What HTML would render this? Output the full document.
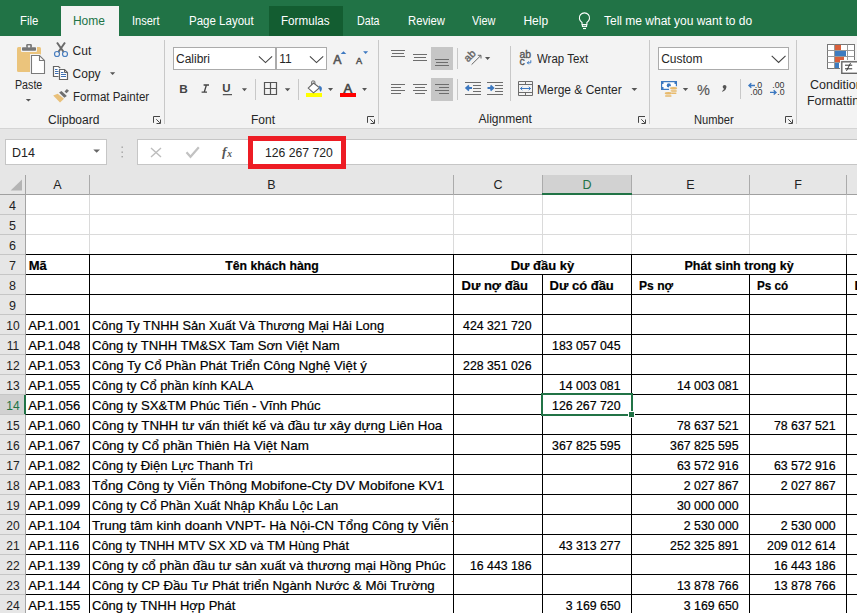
<!DOCTYPE html>
<html><head><meta charset="utf-8"><style>
html,body{margin:0;padding:0}
body{width:857px;height:613px;overflow:hidden;position:relative;background:#fff;font-family:"Liberation Sans",sans-serif}
.r{position:absolute}
.t{position:absolute;line-height:0;white-space:nowrap;-webkit-text-stroke:0.2px currentColor}
.ns{-webkit-text-stroke:0}
.clip{position:absolute;overflow:hidden}
svg{position:absolute;overflow:visible}
</style></head><body>
<div class="r" style="left:0px;top:0px;width:857px;height:36px;background:#217346;"></div>
<div class="r" style="left:61px;top:6px;width:58px;height:30px;background:#f3f3f3;"></div>
<div class="r" style="left:269px;top:6px;width:74px;height:30px;background:#135d31;"></div>
<div class="t ns" style="top:20.84px;font-size:12px;transform:scaleX(0.950);transform-origin:0 0;color:#fff;left:19.9px;">File</div>
<div class="t ns" style="top:20.84px;font-size:12px;color:#217346;left:72.9px;">Home</div>
<div class="t ns" style="top:20.84px;font-size:12px;transform:scaleX(0.920);transform-origin:0 0;color:#fff;left:132.4px;">Insert</div>
<div class="t ns" style="top:20.84px;font-size:12px;transform:scaleX(0.960);transform-origin:0 0;color:#fff;left:188.9px;">Page Layout</div>
<div class="t ns" style="top:20.84px;font-size:12px;transform:scaleX(0.970);transform-origin:0 0;color:#fff;left:280.9px;">Formulas</div>
<div class="t ns" style="top:20.84px;font-size:12px;transform:scaleX(0.890);transform-origin:0 0;color:#fff;left:356.9px;">Data</div>
<div class="t ns" style="top:20.84px;font-size:12px;transform:scaleX(0.940);transform-origin:0 0;color:#fff;left:407.59999999999997px;">Review</div>
<div class="t ns" style="top:20.84px;font-size:12px;transform:scaleX(0.910);transform-origin:0 0;color:#fff;left:471.7px;">View</div>
<div class="t ns" style="top:20.84px;font-size:12px;color:#fff;left:523.4px;">Help</div>
<div class="t ns" style="top:20.84px;font-size:12px;color:#fff;left:604.0px;">Tell me what you want to do</div>
<div class="r" style="left:0px;top:36px;width:857px;height:92px;background:#f3f3f3;"></div>
<div class="r" style="left:0px;top:128px;width:857px;height:1px;background:#d4d4d4;"></div>
<div class="r" style="left:164px;top:40px;width:1px;height:84px;background:#c8c8c8;"></div>
<div class="r" style="left:378px;top:40px;width:1px;height:84px;background:#c8c8c8;"></div>
<div class="r" style="left:649px;top:40px;width:1px;height:84px;background:#c8c8c8;"></div>
<div class="r" style="left:796px;top:40px;width:1px;height:84px;background:#c8c8c8;"></div>
<div class="t ns" style="top:85.04px;font-size:12px;transform:scaleX(0.890);transform-origin:0 0;color:#262626;left:15.3px;">Paste</div>
<div class="t ns" style="top:50.64px;font-size:12px;color:#262626;left:72.6px;">Cut</div>
<div class="t ns" style="top:73.84px;font-size:12px;color:#262626;left:72.6px;">Copy</div>
<div class="t ns" style="top:96.84px;font-size:12px;transform:scaleX(0.960);transform-origin:0 0;color:#262626;left:72.9px;">Format Painter</div>
<div class="t ns" style="top:119.74px;font-size:12px;color:#262626;left:48px;">Clipboard</div>
<div class="t ns" style="top:119.84px;font-size:12px;color:#262626;left:251px;">Font</div>
<div class="t ns" style="top:58.74px;font-size:12px;transform:scaleX(0.955);transform-origin:0 0;color:#262626;left:537.2px;">Wrap Text</div>
<div class="t ns" style="top:90.04px;font-size:12px;color:#262626;left:537px;">Merge &amp; Center</div>
<div class="t ns" style="top:119.44px;font-size:12px;color:#262626;left:478.5px;">Alignment</div>
<div class="t ns" style="top:119.64px;font-size:12px;transform:scaleX(0.930);transform-origin:0 0;color:#262626;left:694.3px;">Number</div>
<div class="t ns" style="top:84.84px;font-size:12px;transform:scaleX(1.040);transform-origin:0 0;color:#262626;left:810px;">Conditional</div>
<div class="t ns" style="top:100.74px;font-size:12px;transform:scaleX(1.030);transform-origin:0 0;color:#262626;left:806.8px;">Formatting</div>
<div class="r" style="left:0px;top:129px;width:857px;height:46px;background:#e6e6e6;"></div>
<div class="r" style="left:5px;top:139px;width:102px;height:26px;background:#fff;border:1px solid #c6c6c6;box-sizing:border-box"></div>
<div class="t ns" style="top:152.67px;font-size:12.5px;color:#222;left:12px;">D14</div>
<div class="r" style="left:137px;top:139px;width:110px;height:26px;background:#fff;border:1px solid #c6c6c6;box-sizing:border-box"></div>
<div class="r" style="left:246px;top:139px;width:620px;height:26px;background:#fff;border:1px solid #c6c6c6;box-sizing:border-box;border-left:none"></div>
<div class="r" style="left:248px;top:136px;width:98px;height:33px;background:transparent;border:5px solid #ed1c24;box-sizing:border-box"></div>
<div class="t ns" style="top:152.97px;font-size:12.5px;transform:scaleX(0.975);transform-origin:0 0;color:#222;left:265.3px;">126 267 720</div>
<div class="r" style="left:0px;top:175px;width:857px;height:20px;background:#e6e6e6;"></div>
<div class="r" style="left:542px;top:175px;width:90px;height:20px;background:#d2d2d2;"></div>
<div class="r" style="left:0px;top:194px;width:857px;height:1px;background:#a0a0a0;"></div>
<div class="r" style="left:25px;top:175px;width:1px;height:438px;background:#a4a4a4;"></div>
<div class="r" style="left:89px;top:175px;width:1px;height:20px;background:#ababab;"></div>
<div class="r" style="left:453px;top:175px;width:1px;height:20px;background:#ababab;"></div>
<div class="r" style="left:542px;top:175px;width:1px;height:20px;background:#ababab;"></div>
<div class="r" style="left:631px;top:175px;width:1px;height:20px;background:#ababab;"></div>
<div class="r" style="left:749px;top:175px;width:1px;height:20px;background:#ababab;"></div>
<div class="r" style="left:846px;top:175px;width:1px;height:20px;background:#ababab;"></div>
<div class="r" style="left:542px;top:193px;width:90px;height:2px;background:#217346;"></div>
<div class="t ns" style="top:184.67px;font-size:12.5px;color:#222;left:-342.5px;width:800px;text-align:center;">A</div>
<div class="t ns" style="top:184.67px;font-size:12.5px;color:#222;left:-128.5px;width:800px;text-align:center;">B</div>
<div class="t ns" style="top:184.67px;font-size:12.5px;color:#222;left:98.0px;width:800px;text-align:center;">C</div>
<div class="t ns" style="top:184.67px;font-size:12.5px;color:#217346;left:187.0px;width:800px;text-align:center;">D</div>
<div class="t ns" style="top:184.67px;font-size:12.5px;color:#222;left:290.5px;width:800px;text-align:center;">E</div>
<div class="t ns" style="top:184.67px;font-size:12.5px;color:#222;left:398.0px;width:800px;text-align:center;">F</div>
<div class="r" style="left:26px;top:195px;width:831px;height:418px;background:#fff;"></div>
<div class="r" style="left:0px;top:195px;width:25px;height:418px;background:#e6e6e6;"></div>
<div class="r" style="left:0px;top:395px;width:24px;height:20px;background:#d2d2d2;"></div>
<div class="r" style="left:24px;top:395px;width:2px;height:20px;background:#217346;"></div>
<div class="r" style="left:0px;top:214px;width:25px;height:1px;background:#c6c6c6;"></div>
<div class="r" style="left:26px;top:214px;width:831px;height:1px;background:#dadada;"></div>
<div class="r" style="left:0px;top:234px;width:25px;height:1px;background:#c6c6c6;"></div>
<div class="r" style="left:26px;top:234px;width:831px;height:1px;background:#dadada;"></div>
<div class="r" style="left:0px;top:254px;width:25px;height:1px;background:#c6c6c6;"></div>
<div class="r" style="left:89px;top:195px;width:1px;height:59px;background:#dadada;"></div>
<div class="r" style="left:453px;top:195px;width:1px;height:59px;background:#dadada;"></div>
<div class="r" style="left:542px;top:195px;width:1px;height:59px;background:#dadada;"></div>
<div class="r" style="left:631px;top:195px;width:1px;height:59px;background:#dadada;"></div>
<div class="r" style="left:749px;top:195px;width:1px;height:59px;background:#dadada;"></div>
<div class="r" style="left:846px;top:195px;width:1px;height:59px;background:#dadada;"></div>
<div class="t ns" style="top:205.67px;font-size:12.5px;color:#222;left:-387.5px;width:800px;text-align:center;">4</div>
<div class="t ns" style="top:225.67px;font-size:12.5px;color:#222;left:-387.5px;width:800px;text-align:center;">5</div>
<div class="t ns" style="top:245.67px;font-size:12.5px;color:#222;left:-387.5px;width:800px;text-align:center;">6</div>
<div class="t ns" style="top:265.67px;font-size:12.5px;color:#222;left:-387.5px;width:800px;text-align:center;">7</div>
<div class="r" style="left:0px;top:274px;width:25px;height:1px;background:#c6c6c6;"></div>
<div class="t ns" style="top:285.67px;font-size:12.5px;color:#222;left:-387.5px;width:800px;text-align:center;">8</div>
<div class="r" style="left:0px;top:294px;width:25px;height:1px;background:#c6c6c6;"></div>
<div class="t ns" style="top:305.67px;font-size:12.5px;color:#222;left:-387.5px;width:800px;text-align:center;">9</div>
<div class="r" style="left:0px;top:314px;width:25px;height:1px;background:#c6c6c6;"></div>
<div class="t ns" style="top:325.67px;font-size:12.5px;transform:scaleX(0.960);transform-origin:50% 0;color:#222;left:-387.2px;width:800px;text-align:center;">10</div>
<div class="r" style="left:0px;top:334px;width:25px;height:1px;background:#c6c6c6;"></div>
<div class="t ns" style="top:345.67px;font-size:12.5px;transform:scaleX(0.960);transform-origin:50% 0;color:#222;left:-387.2px;width:800px;text-align:center;">11</div>
<div class="r" style="left:0px;top:354px;width:25px;height:1px;background:#c6c6c6;"></div>
<div class="t ns" style="top:365.67px;font-size:12.5px;transform:scaleX(0.960);transform-origin:50% 0;color:#222;left:-387.2px;width:800px;text-align:center;">12</div>
<div class="r" style="left:0px;top:374px;width:25px;height:1px;background:#c6c6c6;"></div>
<div class="t ns" style="top:385.67px;font-size:12.5px;transform:scaleX(0.960);transform-origin:50% 0;color:#222;left:-387.2px;width:800px;text-align:center;">13</div>
<div class="r" style="left:0px;top:394px;width:25px;height:1px;background:#c6c6c6;"></div>
<div class="t ns" style="top:405.67px;font-size:12.5px;transform:scaleX(0.960);transform-origin:50% 0;color:#217346;left:-387.2px;width:800px;text-align:center;">14</div>
<div class="r" style="left:0px;top:414px;width:25px;height:1px;background:#c6c6c6;"></div>
<div class="t ns" style="top:425.67px;font-size:12.5px;transform:scaleX(0.960);transform-origin:50% 0;color:#222;left:-387.2px;width:800px;text-align:center;">15</div>
<div class="r" style="left:0px;top:434px;width:25px;height:1px;background:#c6c6c6;"></div>
<div class="t ns" style="top:445.67px;font-size:12.5px;transform:scaleX(0.960);transform-origin:50% 0;color:#222;left:-387.2px;width:800px;text-align:center;">16</div>
<div class="r" style="left:0px;top:454px;width:25px;height:1px;background:#c6c6c6;"></div>
<div class="t ns" style="top:465.67px;font-size:12.5px;transform:scaleX(0.960);transform-origin:50% 0;color:#222;left:-387.2px;width:800px;text-align:center;">17</div>
<div class="r" style="left:0px;top:474px;width:25px;height:1px;background:#c6c6c6;"></div>
<div class="t ns" style="top:485.67px;font-size:12.5px;transform:scaleX(0.960);transform-origin:50% 0;color:#222;left:-387.2px;width:800px;text-align:center;">18</div>
<div class="r" style="left:0px;top:494px;width:25px;height:1px;background:#c6c6c6;"></div>
<div class="t ns" style="top:505.67px;font-size:12.5px;transform:scaleX(0.960);transform-origin:50% 0;color:#222;left:-387.2px;width:800px;text-align:center;">19</div>
<div class="r" style="left:0px;top:514px;width:25px;height:1px;background:#c6c6c6;"></div>
<div class="t ns" style="top:525.67px;font-size:12.5px;transform:scaleX(0.960);transform-origin:50% 0;color:#222;left:-387.2px;width:800px;text-align:center;">20</div>
<div class="r" style="left:0px;top:534px;width:25px;height:1px;background:#c6c6c6;"></div>
<div class="t ns" style="top:545.67px;font-size:12.5px;transform:scaleX(0.960);transform-origin:50% 0;color:#222;left:-387.2px;width:800px;text-align:center;">21</div>
<div class="r" style="left:0px;top:554px;width:25px;height:1px;background:#c6c6c6;"></div>
<div class="t ns" style="top:565.67px;font-size:12.5px;transform:scaleX(0.960);transform-origin:50% 0;color:#222;left:-387.2px;width:800px;text-align:center;">22</div>
<div class="r" style="left:0px;top:574px;width:25px;height:1px;background:#c6c6c6;"></div>
<div class="t ns" style="top:585.67px;font-size:12.5px;transform:scaleX(0.960);transform-origin:50% 0;color:#222;left:-387.2px;width:800px;text-align:center;">23</div>
<div class="r" style="left:0px;top:594px;width:25px;height:1px;background:#c6c6c6;"></div>
<div class="t ns" style="top:605.67px;font-size:12.5px;transform:scaleX(0.960);transform-origin:50% 0;color:#222;left:-387.2px;width:800px;text-align:center;">24</div>
<div class="r" style="left:0px;top:614px;width:25px;height:1px;background:#c6c6c6;"></div>
<div class="r" style="left:26px;top:254px;width:831px;height:1px;background:#000;"></div>
<div class="r" style="left:26px;top:274px;width:517px;height:1px;background:#000;"></div>
<div class="r" style="left:542px;top:274px;width:315px;height:1px;background:#000;"></div>
<div class="r" style="left:26px;top:294px;width:831px;height:1px;background:#000;"></div>
<div class="r" style="left:26px;top:314px;width:831px;height:1px;background:#000;"></div>
<div class="r" style="left:26px;top:334px;width:831px;height:1px;background:#000;"></div>
<div class="r" style="left:26px;top:354px;width:831px;height:1px;background:#000;"></div>
<div class="r" style="left:26px;top:374px;width:831px;height:1px;background:#000;"></div>
<div class="r" style="left:26px;top:394px;width:831px;height:1px;background:#000;"></div>
<div class="r" style="left:26px;top:414px;width:831px;height:1px;background:#000;"></div>
<div class="r" style="left:26px;top:434px;width:831px;height:1px;background:#000;"></div>
<div class="r" style="left:26px;top:454px;width:831px;height:1px;background:#000;"></div>
<div class="r" style="left:26px;top:474px;width:831px;height:1px;background:#000;"></div>
<div class="r" style="left:26px;top:494px;width:831px;height:1px;background:#000;"></div>
<div class="r" style="left:26px;top:514px;width:831px;height:1px;background:#000;"></div>
<div class="r" style="left:26px;top:534px;width:831px;height:1px;background:#000;"></div>
<div class="r" style="left:26px;top:554px;width:831px;height:1px;background:#000;"></div>
<div class="r" style="left:26px;top:574px;width:831px;height:1px;background:#000;"></div>
<div class="r" style="left:26px;top:594px;width:831px;height:1px;background:#000;"></div>
<div class="r" style="left:26px;top:614px;width:831px;height:1px;background:#000;"></div>
<div class="r" style="left:89px;top:254px;width:1px;height:359px;background:#000;"></div>
<div class="r" style="left:453px;top:254px;width:1px;height:359px;background:#000;"></div>
<div class="r" style="left:542px;top:275px;width:1px;height:338px;background:#000;"></div>
<div class="r" style="left:631px;top:254px;width:1px;height:359px;background:#000;"></div>
<div class="r" style="left:749px;top:275px;width:1px;height:338px;background:#000;"></div>
<div class="r" style="left:846px;top:254px;width:1px;height:359px;background:#000;"></div>
<div class="r" style="left:541px;top:393px;width:92px;height:23px;border:2px solid #217346;box-sizing:border-box"></div>
<div class="r" style="left:629px;top:412px;width:5px;height:5px;background:#217346;border:1px solid #fff;box-sizing:content-box;left:628px;top:411px"></div>
<div class="t" style="top:265.50px;font-size:13px;font-weight:700;left:28.7px;">Mã</div>
<div class="t" style="top:265.50px;font-size:13px;transform:scaleX(0.944);transform-origin:50% 0;font-weight:700;left:-128.3px;width:800px;text-align:center;">Tên khách hàng</div>
<div class="t" style="top:265.50px;font-size:13px;font-weight:700;left:142.5px;width:800px;text-align:center;">Dư đầu kỳ</div>
<div class="t" style="top:265.50px;font-size:13px;transform:scaleX(0.963);transform-origin:50% 0;font-weight:700;left:339.29999999999995px;width:800px;text-align:center;">Phát sinh trong kỳ</div>
<div class="t" style="top:285.50px;font-size:13px;font-weight:700;left:461.5px;">Dư nợ đầu</div>
<div class="t" style="top:285.50px;font-size:13px;font-weight:700;left:549.5px;">Dư có đầu</div>
<div class="t" style="top:285.50px;font-size:13px;transform:scaleX(0.930);transform-origin:0 0;font-weight:700;left:638.8px;">Ps nợ</div>
<div class="t" style="top:285.50px;font-size:13px;transform:scaleX(0.900);transform-origin:0 0;font-weight:700;left:756.8px;">Ps có</div>
<div class="t" style="top:285.50px;font-size:13px;font-weight:700;left:854.4px;">Dư</div>
<div class="t" style="top:325.50px;font-size:13px;left:28.3px;">AP.1.001</div>
<div class="clip" style="left:90px;top:310px;width:363px;height:24px"><div class="t" style="left:2px;top:15.50px;font-size:13px;transform:scaleX(0.991);transform-origin:0 0">Công Ty TNHH Sản Xuất Và Thương Mại Hải Long</div></div>
<div class="t" style="top:325.67px;font-size:12.5px;transform:scaleX(0.985);transform-origin:100% 0;right:325.4px;">424 321 720</div>
<div class="t" style="top:345.50px;font-size:13px;left:28.3px;">AP.1.048</div>
<div class="clip" style="left:90px;top:330px;width:363px;height:24px"><div class="t" style="left:2px;top:15.50px;font-size:13px;transform:scaleX(1.01);transform-origin:0 0">Công ty TNHH TM&amp;SX Tam Sơn Việt Nam</div></div>
<div class="t" style="top:345.67px;font-size:12.5px;transform:scaleX(0.985);transform-origin:100% 0;right:236.39999999999998px;">183 057 045</div>
<div class="t" style="top:365.50px;font-size:13px;left:28.3px;">AP.1.053</div>
<div class="clip" style="left:90px;top:350px;width:363px;height:24px"><div class="t" style="left:2px;top:15.50px;font-size:13px;transform:scaleX(1.016);transform-origin:0 0">Công Ty Cổ Phần Phát Triển Công Nghệ Việt ý</div></div>
<div class="t" style="top:365.67px;font-size:12.5px;transform:scaleX(0.985);transform-origin:100% 0;right:325.4px;">228 351 026</div>
<div class="t" style="top:385.50px;font-size:13px;left:28.3px;">AP.1.055</div>
<div class="clip" style="left:90px;top:370px;width:363px;height:24px"><div class="t" style="left:2px;top:15.50px;font-size:13px;transform:scaleX(0.993);transform-origin:0 0">Công ty Cổ phần kính KALA</div></div>
<div class="t" style="top:385.67px;font-size:12.5px;transform:scaleX(0.985);transform-origin:100% 0;right:236.39999999999998px;">14 003 081</div>
<div class="t" style="top:385.67px;font-size:12.5px;transform:scaleX(0.985);transform-origin:100% 0;right:118.39999999999998px;">14 003 081</div>
<div class="t" style="top:405.50px;font-size:13px;left:28.3px;">AP.1.056</div>
<div class="clip" style="left:90px;top:390px;width:363px;height:24px"><div class="t" style="left:2px;top:15.50px;font-size:13px;transform:scaleX(1.011);transform-origin:0 0">Công ty SX&amp;TM Phúc Tiến - Vĩnh Phúc</div></div>
<div class="t" style="top:405.67px;font-size:12.5px;transform:scaleX(0.985);transform-origin:100% 0;right:236.39999999999998px;">126 267 720</div>
<div class="t" style="top:425.50px;font-size:13px;left:28.3px;">AP.1.060</div>
<div class="clip" style="left:90px;top:410px;width:363px;height:24px"><div class="t" style="left:2px;top:15.50px;font-size:13px;transform:scaleX(1.023);transform-origin:0 0">Công ty TNHH tư vấn thiết kế và đầu tư xây dựng Liên Hoa</div></div>
<div class="t" style="top:425.67px;font-size:12.5px;transform:scaleX(0.985);transform-origin:100% 0;right:118.39999999999998px;">78 637 521</div>
<div class="t" style="top:425.67px;font-size:12.5px;transform:scaleX(0.985);transform-origin:100% 0;right:21.399999999999977px;">78 637 521</div>
<div class="t" style="top:445.50px;font-size:13px;left:28.3px;">AP.1.067</div>
<div class="clip" style="left:90px;top:430px;width:363px;height:24px"><div class="t" style="left:2px;top:15.50px;font-size:13px;transform:scaleX(1.03);transform-origin:0 0">Công ty Cổ phần Thiên Hà Việt Nam</div></div>
<div class="t" style="top:445.67px;font-size:12.5px;transform:scaleX(0.985);transform-origin:100% 0;right:236.39999999999998px;">367 825 595</div>
<div class="t" style="top:445.67px;font-size:12.5px;transform:scaleX(0.985);transform-origin:100% 0;right:118.39999999999998px;">367 825 595</div>
<div class="t" style="top:465.50px;font-size:13px;left:28.3px;">AP.1.082</div>
<div class="clip" style="left:90px;top:450px;width:363px;height:24px"><div class="t" style="left:2px;top:15.50px;font-size:13px;transform:scaleX(1.005);transform-origin:0 0">Công ty Điện Lực Thanh Trì</div></div>
<div class="t" style="top:465.67px;font-size:12.5px;transform:scaleX(0.985);transform-origin:100% 0;right:118.39999999999998px;">63 572 916</div>
<div class="t" style="top:465.67px;font-size:12.5px;transform:scaleX(0.985);transform-origin:100% 0;right:21.399999999999977px;">63 572 916</div>
<div class="t" style="top:485.50px;font-size:13px;left:28.3px;">AP.1.083</div>
<div class="clip" style="left:90px;top:470px;width:363px;height:24px"><div class="t" style="left:2px;top:15.50px;font-size:13px;transform:scaleX(1.05);transform-origin:0 0">Tổng Công ty Viễn Thông Mobifone-Cty DV Mobifone KV1</div></div>
<div class="t" style="top:485.67px;font-size:12.5px;transform:scaleX(0.985);transform-origin:100% 0;right:118.39999999999998px;">2 027 867</div>
<div class="t" style="top:485.67px;font-size:12.5px;transform:scaleX(0.985);transform-origin:100% 0;right:21.399999999999977px;">2 027 867</div>
<div class="t" style="top:505.50px;font-size:13px;left:28.3px;">AP.1.099</div>
<div class="clip" style="left:90px;top:490px;width:363px;height:24px"><div class="t" style="left:2px;top:15.50px;font-size:13px;transform:scaleX(0.993);transform-origin:0 0">Công ty Cổ Phần Xuất Nhập Khẩu Lộc Lan</div></div>
<div class="t" style="top:505.67px;font-size:12.5px;transform:scaleX(0.985);transform-origin:100% 0;right:118.39999999999998px;">30 000 000</div>
<div class="t" style="top:525.50px;font-size:13px;left:28.3px;">AP.1.104</div>
<div class="clip" style="left:90px;top:510px;width:363px;height:24px"><div class="t" style="left:2px;top:15.50px;font-size:13px;transform:scaleX(1.033);transform-origin:0 0">Trung tâm kinh doanh VNPT- Hà Nội-CN Tổng Công ty Viễn Thông</div></div>
<div class="t" style="top:525.67px;font-size:12.5px;transform:scaleX(0.985);transform-origin:100% 0;right:118.39999999999998px;">2 530 000</div>
<div class="t" style="top:525.67px;font-size:12.5px;transform:scaleX(0.985);transform-origin:100% 0;right:21.399999999999977px;">2 530 000</div>
<div class="t" style="top:545.50px;font-size:13px;left:28.3px;">AP.1.116</div>
<div class="clip" style="left:90px;top:530px;width:363px;height:24px"><div class="t" style="left:2px;top:15.50px;font-size:13px;transform:scaleX(0.979);transform-origin:0 0">Công ty TNHH MTV SX XD và TM Hùng Phát</div></div>
<div class="t" style="top:545.67px;font-size:12.5px;transform:scaleX(0.985);transform-origin:100% 0;right:236.39999999999998px;">43 313 277</div>
<div class="t" style="top:545.67px;font-size:12.5px;transform:scaleX(0.985);transform-origin:100% 0;right:118.39999999999998px;">252 325 891</div>
<div class="t" style="top:545.67px;font-size:12.5px;transform:scaleX(0.985);transform-origin:100% 0;right:21.399999999999977px;">209 012 614</div>
<div class="t" style="top:565.50px;font-size:13px;left:28.3px;">AP.1.139</div>
<div class="clip" style="left:90px;top:550px;width:363px;height:24px"><div class="t" style="left:2px;top:15.50px;font-size:13px;transform:scaleX(1.026);transform-origin:0 0">Công ty cổ phần đầu tư sản xuất và thương mại Hồng Phúc</div></div>
<div class="t" style="top:565.67px;font-size:12.5px;transform:scaleX(0.985);transform-origin:100% 0;right:325.4px;">16 443 186</div>
<div class="t" style="top:565.67px;font-size:12.5px;transform:scaleX(0.985);transform-origin:100% 0;right:21.399999999999977px;">16 443 186</div>
<div class="t" style="top:585.50px;font-size:13px;left:28.3px;">AP.1.144</div>
<div class="clip" style="left:90px;top:570px;width:363px;height:24px"><div class="t" style="left:2px;top:15.50px;font-size:13px;transform:scaleX(1.022);transform-origin:0 0">Công ty CP Đầu Tư Phát triển Ngành Nước &amp; Môi Trường</div></div>
<div class="t" style="top:585.67px;font-size:12.5px;transform:scaleX(0.985);transform-origin:100% 0;right:118.39999999999998px;">13 878 766</div>
<div class="t" style="top:585.67px;font-size:12.5px;transform:scaleX(0.985);transform-origin:100% 0;right:21.399999999999977px;">13 878 766</div>
<div class="t" style="top:605.50px;font-size:13px;left:28.3px;">AP.1.155</div>
<div class="clip" style="left:90px;top:590px;width:363px;height:24px"><div class="t" style="left:2px;top:15.50px;font-size:13px;transform:scaleX(1.0);transform-origin:0 0">Công ty TNHH Hợp Phát</div></div>
<div class="t" style="top:605.67px;font-size:12.5px;transform:scaleX(0.985);transform-origin:100% 0;right:236.39999999999998px;">3 169 650</div>
<div class="t" style="top:605.67px;font-size:12.5px;transform:scaleX(0.985);transform-origin:100% 0;right:118.39999999999998px;">3 169 650</div>
<svg style="left:0;top:0" width="857" height="195" viewBox="0 0 857 195">
<!-- bulb -->
<path d="M582,22.4 A5.1,5.1 0 1 1 586.9,22.4 L586.9,24.8 L582,24.8 Z" fill="none" stroke="#fff" stroke-width="1.1"/>
<rect x="582.4" y="24.6" width="4.2" height="2" fill="none" stroke="#fff" stroke-width="1"/>
<rect x="583" y="28" width="3" height="1.1" fill="#fff"/>
<!-- paste -->
<rect x="17" y="47" width="24" height="25" rx="1.5" fill="#ebc47c"/>
<rect x="21" y="46" width="16" height="6" rx="1" fill="#f3f3f3"/>
<rect x="22" y="47.2" width="14" height="3.6" rx="0.8" fill="#777"/>
<rect x="26.2" y="44" width="5.7" height="4" rx="1.2" fill="#777"/>
<rect x="27.8" y="45.4" width="2.4" height="2" fill="#f3f3f3"/>
<path d="M31.5,55.5 H39.5 L44.5,60.5 V73.5 H31.5 Z" fill="#f3f3f3" stroke="#f3f3f3" stroke-width="3"/>
<path d="M31.5,55.5 H39.5 L44.5,60.5 V73.5 H31.5 Z" fill="#fff" stroke="#7a7a7a" stroke-width="1.1"/>
<path d="M39.5,55.5 V60.5 H44.5" fill="none" stroke="#7a7a7a" stroke-width="1.1"/>
<path d="M25.8,99 H31 L28.4,101.6 Z" fill="#555"/>
<!-- scissors -->
<path d="M57,42.5 L63.8,52.2 M65,42.5 L58.2,52.2" stroke="#6a6a6a" stroke-width="2" fill="none"/>
<circle cx="57" cy="54" r="2.5" fill="none" stroke="#4a7fc0" stroke-width="1.2"/>
<circle cx="65" cy="54" r="2.5" fill="none" stroke="#4a7fc0" stroke-width="1.2"/>
<!-- copy -->
<rect x="53.5" y="66.5" width="6.5" height="10" fill="#fff"/>
<path d="M58.5,76.5 H53.5 V66.5 H58.5 L60.2,68.2" fill="none" stroke="#636363" stroke-width="1.2"/>
<path d="M55,69.5 H57.5 M55,71.5 H58.5 M55,73.5 H58.5" stroke="#3d6fb3" stroke-width="1"/>
<path d="M59.5,69.5 H64.5 L67.5,72.5 V79.5 H59.5 Z" fill="#fff" stroke="#636363" stroke-width="1.2"/>
<path d="M64.5,69.5 V72.5 H67.5" fill="none" stroke="#636363" stroke-width="1"/>
<path d="M61,72.5 H63.5 M61,74.5 H66 M61,76.5 H66" stroke="#3d6fb3" stroke-width="1"/>
<path d="M110,72.3 H115.2 L112.6,74.9 Z" fill="#555"/>
<!-- format painter -->
<path d="M53.2,95.5 L57.7,93.7 L64,98.7 L60,102.6 Z" fill="#e9c07a"/>
<path d="M59.1,92.6 L61.5,91 L66.9,96 L64.3,97.8 Z" fill="#6f6f6f"/>
<path d="M64.5,91.5 L66.9,89 L69,90.8 L66.5,93.3 Z" fill="#6f6f6f"/>
<!-- launchers -->
<g fill="none" stroke="#444" stroke-width="1">
<path d="M153.5,122.8 V116.5 H160"/><path d="M156.3,119.3 L159.8,122.8 M160.5,119.5 V123.5 H156.5"/>
<path d="M367.5,122.8 V116.5 H374"/><path d="M370.3,119.3 L373.8,122.8 M374.5,119.5 V123.5 H370.5"/>
<path d="M638.5,122.8 V116.5 H645"/><path d="M641.3,119.3 L644.8,122.8 M645.5,119.5 V123.5 H641.5"/>
<path d="M785.5,122.8 V116.5 H792"/><path d="M788.3,119.3 L791.8,122.8 M792.5,119.5 V123.5 H788.5"/>
</g>
<!-- font boxes -->
<rect x="173.5" y="47.5" width="153" height="22" fill="#fff" stroke="#ababab"/>
<path d="M275.5,47.5 V69.5 M276.5,47.5 V69.5" stroke="#ababab"/>
<text x="176" y="63" font-size="12" fill="#262626" font-family="Liberation Sans">Calibri</text>
<text x="279.3" y="63" font-size="12" fill="#262626" font-family="Liberation Sans">11</text>
<path d="M258.9,56.3 L265.5,62.6 L272.1,56.3 M309.9,56.3 L316.5,62.6 L323.2,56.3" fill="none" stroke="#444" stroke-width="1.1"/>
<text x="333.2" y="63.9" font-size="12.3" fill="#555" stroke="#555" stroke-width="0.6" font-family="Liberation Sans">A</text>
<path d="M340.7,54 L343.5,51.3 L346.3,54 Z" fill="#3c78c0"/>
<text x="356" y="63.9" font-size="9.2" fill="#555" stroke="#555" stroke-width="0.5" font-family="Liberation Sans">A</text>
<path d="M363.1,51.3 H368.1 L365.6,54 Z" fill="#3c78c0"/>
<text x="179.2" y="92.7" font-size="11.8" font-weight="700" fill="#444" font-family="Liberation Sans">B</text>
<path d="M203.6,85 H209 M201.6,92.2 H207 M206.4,85 L204.2,92.2" stroke="#444" stroke-width="1.3" fill="none"/>
<text x="222.2" y="92.4" font-size="11.5" font-weight="700" fill="#444" font-family="Liberation Sans">U</text>
<rect x="222.8" y="94.1" width="9.2" height="1.1" fill="#444"/>
<path d="M241.9,88.2 H247 L244.45,91.2 Z M284.8,88.2 H290.3 L287.55,91.2 Z M328,88 H333.1 L330.55,91 Z M362.1,88 H367 L364.55,91 Z" fill="#555"/>
<rect x="255" y="79" width="1" height="21" fill="#c8c8c8"/>
<rect x="298" y="79" width="1" height="21" fill="#c8c8c8"/>
<path d="M264.5,82.5 H276.5 V94.5 H264.5 Z M270.5,82.5 V94.5 M264.5,88.5 H276.5" fill="none" stroke="#555" stroke-width="1.2"/>
<rect x="306" y="93" width="16" height="4" fill="#ffff00"/>
<path d="M311.7,86 V81.8 Q311.7,81 312.5,81 H314 Q314.9,81 314.9,82 V85.5" fill="none" stroke="#666" stroke-width="1"/>
<path d="M308.2,88.1 L313.5,83 L319.6,87.7 L313.5,92.8 Z" fill="#fff" stroke="#666" stroke-width="1.1"/>
<path d="M319,85.5 Q322.5,86.5 321.8,89.5 L320.8,92 Q318.8,90.5 319.4,88 Z" fill="#3c78c0"/>
<text x="343.5" y="92.6" font-size="13" fill="#444" stroke="#444" stroke-width="0.6" font-family="Liberation Sans">A</text>
<rect x="340" y="93" width="16" height="4" fill="#ff0000"/>
<!-- alignment -->
<rect x="431" y="47" width="22" height="23" fill="#c6c6c6"/>
<rect x="431" y="78" width="22" height="23" fill="#c6c6c6"/>
<g stroke="#6d6d6d" stroke-width="1" fill="none">
<path d="M391,50.5 H405 M392,53.5 H404 M391,56.5 H405"/>
<path d="M413,54.5 H427 M414,57.5 H426 M413,60.5 H427"/>
<path d="M435,59.5 H449 M436,62.5 H448 M435,65.5 H449"/>
<path d="M391,84.5 H405 M391,87.5 H401 M391,90.5 H405 M391,93.5 H401"/>
<path d="M413,84.5 H427 M415,87.5 H425 M413,90.5 H427 M415,93.5 H425"/>
<path d="M435,84.5 H449 M439,87.5 H449 M435,90.5 H449 M439,93.5 H449"/>
<path d="M465,82.5 H481 M473,85.5 H481 M473,88.5 H481 M473,91.5 H481 M465,94.5 H481"/>
<path d="M487,82.5 H503 M495,85.5 H503 M495,88.5 H503 M495,91.5 H503 M487,94.5 H503"/>
</g>
<rect x="457" y="48" width="1" height="21" fill="#c8c8c8"/>
<rect x="457" y="79" width="1" height="21" fill="#c8c8c8"/>
<rect x="510" y="46" width="1" height="55" fill="#c8c8c8"/>
<path d="M472,88 H466.5 M469,85.5 L466.2,88 L469,90.5" fill="none" stroke="#3c78c0" stroke-width="1.8"/>
<path d="M487.5,88 H493 M490.5,85.5 L493.3,88 L490.5,90.5" fill="none" stroke="#3c78c0" stroke-width="1.8"/>
<text x="0" y="0" font-size="10.5" fill="#666" stroke="#666" stroke-width="0.4" font-family="Liberation Sans" transform="translate(468,62.5) rotate(-45)">ab</text>
<path d="M471.6,64.6 L481,55.3 M477.8,55.3 H481 V58.5" fill="none" stroke="#666" stroke-width="1"/>
<path d="M485,56.9 H490.2 L487.6,59.9 Z" fill="#555"/>
<text x="519.4" y="57.9" font-size="10.5" fill="#555" stroke="#555" stroke-width="0.35" font-family="Liberation Sans" textLength="11.6" lengthAdjust="spacingAndGlyphs">ab</text>
<text x="519.6" y="65" font-size="10.5" fill="#555" stroke="#555" stroke-width="0.35" font-family="Liberation Sans">c</text>
<path d="M530.8,60.3 V62.8 H527.3 M528.8,61.3 L527.3,62.8 L528.8,64.3" fill="none" stroke="#3c78c0" stroke-width="1"/>
<path d="M518.5,81.5 H532.5 V95.5 H518.5 Z M518.5,84.5 H532.5 M518.5,92.5 H532.5 M525.5,81.5 V84.5 M525.5,92.5 V95.5" fill="none" stroke="#6d6d6d" stroke-width="1"/>
<path d="M520.5,88.5 H530.5 M522.3,86.8 L520.5,88.5 L522.3,90.2 M528.7,86.8 L530.5,88.5 L528.7,90.2" fill="none" stroke="#3c78c0" stroke-width="1"/>
<path d="M631.5,88 H637.3 L634.4,91 Z" fill="#555"/>
<!-- number -->
<rect x="658.5" y="47.5" width="130" height="22" fill="#fff" stroke="#ababab"/>
<text x="661.2" y="63.2" font-size="12" fill="#262626" font-family="Liberation Sans">Custom</text>
<path d="M771.7,55.8 L778.6,62.5 L785.5,55.8" fill="none" stroke="#444" stroke-width="1.1"/>
<rect x="661" y="81" width="16" height="9" fill="#3b78c0"/>
<path d="M662.2,84 H663.5 V82.2 H674.5 V84 H675.8 V87 H674.5 V88.8 H663.5 V87 H662.2 Z" fill="#fff"/>
<circle cx="668.8" cy="85.4" r="2.1" fill="#3b78c0"/>
<rect x="669" y="86.2" width="9" height="12" fill="#f3f3f3"/>
<ellipse cx="673.6" cy="88.3" rx="3.6" ry="1.3" fill="#e8ba6c"/>
<rect x="670.5" y="90.3" width="6.4" height="1.4" rx="0.7" fill="#e8ba6c"/>
<rect x="671" y="92.5" width="5.5" height="1.4" rx="0.7" fill="#e8ba6c"/>
<rect x="663.5" y="91.5" width="8" height="7" fill="#f3f3f3"/>
<ellipse cx="668.3" cy="93.3" rx="3.6" ry="1.3" fill="#e8ba6c"/>
<rect x="665" y="95.3" width="6.6" height="1.5" rx="0.7" fill="#e8ba6c"/>
<path d="M682.8,87.9 H688.2 L685.5,91 Z" fill="#555"/>
<text x="697" y="94.9" font-size="14.5" fill="#555" stroke="#555" stroke-width="0.15" font-family="Liberation Sans">%</text>
<circle cx="724.6" cy="86.8" r="1.9" fill="#555"/><path d="M726.2,87.3 Q726.3,90.3 722.2,91.8 L722,91.2 Q724.3,89.8 724.2,87.8 Z" fill="#555"/>
<rect x="740" y="79" width="1" height="20" fill="#c8c8c8"/>
<text x="754.8" y="87.9" font-size="8.8" fill="#333" font-family="Liberation Sans">.0</text>
<text x="750.2" y="94.9" font-size="8.8" fill="#333" font-family="Liberation Sans">.00</text>
<path d="M755,85.5 H749 M751.3,83.3 L749,85.5 L751.3,87.7" fill="none" stroke="#3c78c0" stroke-width="1.4"/>
<text x="772.2" y="87.9" font-size="8.8" fill="#333" font-family="Liberation Sans">.00</text>
<text x="777.3" y="94.9" font-size="8.8" fill="#333" font-family="Liberation Sans">.0</text>
<path d="M770,92.4 H776 M773.7,90.2 L776,92.4 L773.7,94.6" fill="none" stroke="#3c78c0" stroke-width="1.4"/>
<!-- conditional formatting -->
<rect x="827.5" y="44.5" width="27" height="24" fill="#fff" stroke="#777" stroke-width="1"/>
<rect x="835" y="45" width="6" height="5" fill="#d9603b"/>
<rect x="835" y="51" width="11" height="5" fill="#3e7cc0"/>
<rect x="835" y="57" width="9" height="5" fill="#d9603b"/>
<rect x="835" y="63" width="4" height="5" fill="#3e7cc0"/>
<path d="M834.5,44.5 V68.5 M847.5,44.5 V68.5 M827.5,50.5 H854.5 M827.5,56.5 H854.5 M827.5,62.5 H854.5" stroke="#999" stroke-width="1" fill="none"/>
<rect x="840" y="60" width="20" height="15" fill="#f3f3f3"/>
<rect x="841.8" y="61.8" width="18" height="11.5" fill="#fff" stroke="#666" stroke-width="1.4"/>
<path d="M845,65.2 H852.2 M845,68.8 H852.2 M850.5,63.2 L846.5,70.8" stroke="#333" stroke-width="1" fill="none"/>
<!-- formula bar icons -->
<path d="M93.3,149.4 H100 L96.65,152.8 Z" fill="#666"/>
<rect x="121.5" y="146.5" width="1.4" height="1.4" fill="#a0a0a0"/>
<rect x="121.5" y="151.5" width="1.4" height="1.4" fill="#a0a0a0"/>
<rect x="121.5" y="156" width="1.4" height="1.4" fill="#a0a0a0"/>
<path d="M151,148 L161,157 M161,148 L151,157" stroke="#bdbdbd" stroke-width="1.4"/>
<path d="M186.5,152.3 L190.5,156.8 L198.8,147.3" stroke="#c2c2c2" stroke-width="2.2" fill="none"/>
<text x="222" y="156" font-size="13.5" font-style="italic" font-weight="700" fill="#555" font-family="Liberation Serif">f</text>
<text x="227.3" y="156.8" font-size="9.5" font-style="italic" font-weight="700" fill="#555" font-family="Liberation Serif">x</text>
<!-- select all -->
<path d="M22,179.5 V190.6 H10.6 Z" fill="#b4b4b4"/>
</svg>

</body></html>
